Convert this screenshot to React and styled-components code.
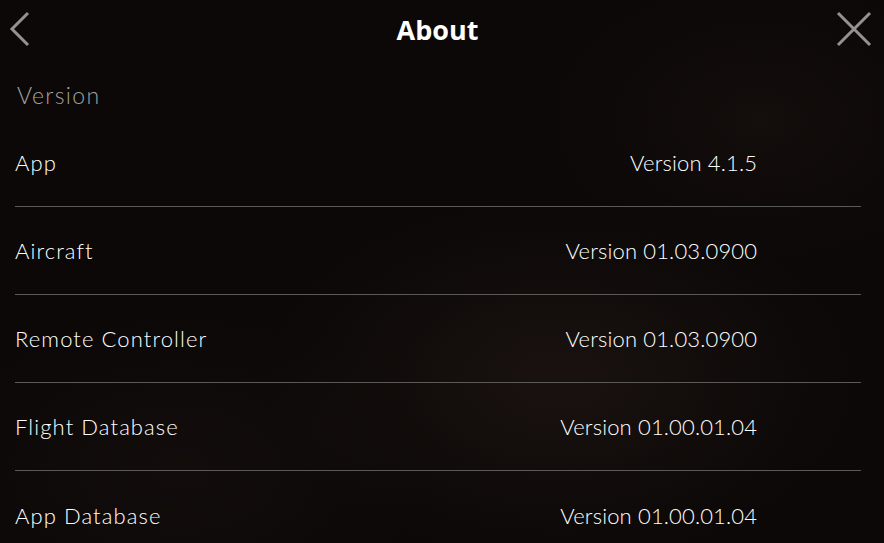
import React from 'react';
import styled, { createGlobalStyle } from 'styled-components';

const GlobalStyle = createGlobalStyle`
  html, body {
    margin: 0;
    padding: 0;
    background: #0b0807;
  }
  * { box-sizing: border-box; }
`;

const rows = [
  { label: 'App', value: 'Version 4.1.5' },
  { label: 'Aircraft', value: 'Version 01.03.0900' },
  { label: 'Remote Controller', value: 'Version 01.03.0900' },
  { label: 'Flight Database', value: 'Version 01.00.01.04' },
  { label: 'App Database', value: 'Version 01.00.01.04' },
];

const About = () => (
  <Screen>
    <GlobalStyle />
    <Header>
      <IconButton aria-label="Back">
        <svg width="22" height="36" viewBox="0 0 22 36">
          <path d="M19 2 L3 18 L19 34" fill="none" stroke="#939393" strokeWidth="3" />
        </svg>
      </IconButton>
      <Title>About</Title>
      <IconButton aria-label="Close" end>
        <svg width="36" height="36" viewBox="0 0 36 36">
          <path d="M2 2 L34 34 M34 2 L2 34" fill="none" stroke="#939393" strokeWidth="3" />
        </svg>
      </IconButton>
    </Header>
    <SectionLabel>Version</SectionLabel>
    <List>
      {rows.map((r, i) => (
        <Row key={r.label} last={i === rows.length - 1}>
          <Label>{r.label}</Label>
          <Value>{r.value}</Value>
        </Row>
      ))}
    </List>
  </Screen>
);

const Screen = styled.div`
  width: 884px;
  height: 543px;
  overflow: hidden;
  background:
    radial-gradient(ellipse 420px 260px at 560px 380px, rgba(40, 28, 24, 0.5), transparent 70%),
    radial-gradient(ellipse 300px 200px at 760px 120px, rgba(30, 20, 18, 0.45), transparent 70%),
    radial-gradient(ellipse 350px 220px at 180px 470px, rgba(28, 20, 18, 0.45), transparent 70%),
    #0b0807;
  font-family: Lato, 'Liberation Sans', sans-serif;
  font-weight: 300;
  color: #fff;
`;

const Header = styled.div`
  height: 58px;
  display: grid;
  grid-template-columns: 1fr auto 1fr;
  align-items: center;
  padding: 0 12px 0 9px;
`;

const IconButton = styled.button`
  background: none;
  border: none;
  padding: 0;
  display: flex;
  align-items: center;
  justify-self: ${(p) => (p.end ? 'end' : 'start')};
  cursor: pointer;
`;

const Title = styled.h1`
  margin: 0;
  font-family: 'Open Sans', 'Liberation Sans', sans-serif;
  font-size: 27px;
  font-weight: 700;
  color: #fff;
  transform: translateX(-3px);
`;

const SectionLabel = styled.div`
  padding: 23px 0 0 17px;
  height: 61px;
  font-size: 23px;
  letter-spacing: 1.4px;
  color: #a2a2a2;
`;

const List = styled.div`
  padding: 0 23px 0 15px;
`;

const Row = styled.div`
  height: 88px;
  display: flex;
  align-items: center;
  justify-content: space-between;
  padding-right: 104px;
  border-bottom: ${(p) => (p.last ? 'none' : '1px solid #5c5a59')};
  font-size: 22px;
`;

const Label = styled.span`
  letter-spacing: 1.1px;
`;

const Value = styled.span`
  letter-spacing: 0.15px;
  margin-right: -0.15px;
`;

export default About;
